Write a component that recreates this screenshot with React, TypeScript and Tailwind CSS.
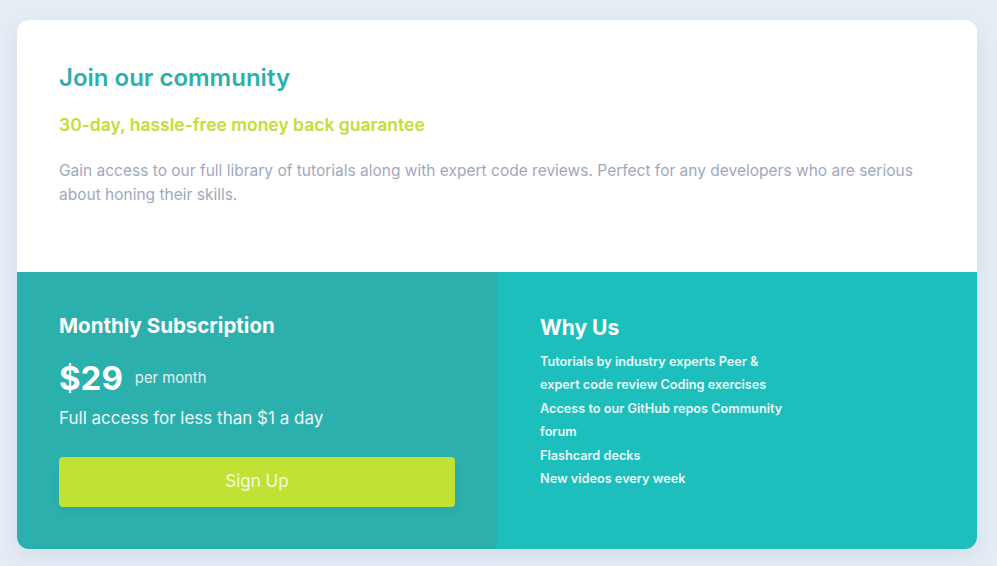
import React from 'react';

const whyUs = [
    'Tutorials by industry experts Peer &',
    'expert code review Coding exercises',
    'Access to our GitHub repos Community',
    'forum',
    'Flashcard decks',
    'New videos every week'
];

const App: React.FC = () => {
    return (
        <div className="min-h-[566px] w-full bg-[#e5edf5] pt-[20px] px-[17px] font-['Inter',sans-serif]">
            <div className="w-[960px] rounded-[12px] overflow-hidden bg-white shadow-[0_8px_20px_rgba(160,180,200,0.25)]">
                <section className="px-[42px] pt-[44px] pb-[65px]">
                    <h1 className="text-[24px] leading-[28px] font-semibold text-[#2bb0ae]">Join our community</h1>
                    <h2 className="mt-[21px] text-[17.5px] leading-[24px] font-semibold text-[#bfdf35]">
                        30-day, hassle-free money back guarantee
                    </h2>
                    <p className="mt-[22px] text-[15.5px] leading-[24px] text-[#9fa8bd]">
                        Gain access to our full library of tutorials along with expert code reviews. Perfect for any developers who are serious about honing their skills.
                    </p>
                </section>

                <div className="grid grid-cols-2">
                    <section className="bg-[#2bb0ae] px-[42px] pt-[40px] pb-[42px] text-white">
                        <h3 className="text-[20.5px] leading-[28px] font-bold">Monthly Subscription</h3>
                        <div className="mt-[18px] flex items-center gap-[12px] h-[40px]">
                            <span className="text-[33px] leading-[40px] font-bold">$29</span>
                            <span className="text-[14.8px] text-[#e3f1f3]">per month</span>
                        </div>
                        <p className="mt-[7px] text-[17px] leading-[26px] text-[#eef7f8]">Full access for less than $1 a day</p>
                        <button className="mt-[26px] w-[396px] h-[50px] rounded-[4px] bg-[#bfe234] text-[17px] text-[#f3f9e0] shadow-[0_4px_8px_rgba(0,0,0,0.06)]">
                            Sign Up
                        </button>
                    </section>
                    <section className="bg-[#1dbfbd] px-[43px] pt-[42px] text-white">
                        <h3 className="text-[21px] leading-[28px] font-bold">Why Us</h3>
                        <ul className="mt-[8px] text-[12.7px] leading-[23.4px] font-semibold text-[#eaf7f7]">
                            {whyUs.map((line, i) => (
                                <li key={i}>{line}</li>
                            ))}
                        </ul>
                    </section>
                </div>
            </div>
        </div>
    );
};

export default App;
